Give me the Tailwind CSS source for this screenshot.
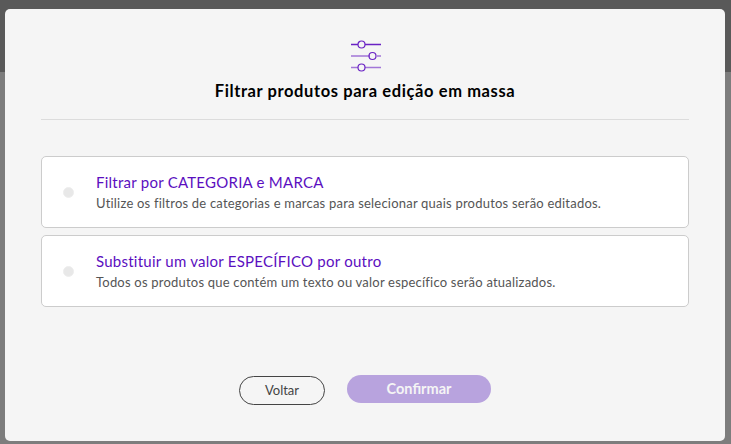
<!DOCTYPE html>
<html lang="pt-br">
<head>
    <meta charset="UTF-8">
    <title>Filtrar produtos</title>
    <script src="https://cdn.jsdelivr.net/npm/@tailwindcss/browser@4"></script>
</head>
<body class="bg-[#7d7d7d] font-['Lato',sans-serif]">
    <div class="relative w-[731px] h-[444px] overflow-hidden">
        <div class="h-[72px] bg-[#595959]"></div>
        <div class="h-[372px] bg-[#7d7d7d]"></div>

        <!-- Modal -->
        <div class="absolute left-[5px] top-[9px] w-[720px] h-[432px] bg-[#f5f5f5] rounded-[5px] flex flex-col items-center">
            <svg class="mt-[31px] ml-[2px]" width="32" height="34" viewBox="0 0 32 34" fill="none" stroke="#6a22c4" stroke-width="1.400">
                <path d="M1 4.500h7M15 4.500h16"/>
                <circle cx="11.500" cy="4.500" r="3.500" stroke-width="1.200"/>
                <path d="M1 16h19M27 16h4" stroke-opacity=".6"/>
                <circle cx="22.500" cy="16" r="3.500" stroke-width="1.200"/>
                <path d="M1 27.500h7M15 27.500h16" stroke-opacity=".6"/>
                <circle cx="11.500" cy="27.500" r="3.500" stroke-width="1.200"/>
            </svg>
            <h1 class="mt-[6px] text-[16.500px] leading-[22px] font-bold tracking-[0.6px] text-black">Filtrar produtos para edição em massa</h1>
            <div class="mt-[17px] w-[648px] border-t border-[#dcdcdc]"></div>

            <div class="mt-[36px] w-[648px] flex flex-col gap-[7px]">
                <div class="h-[72px] bg-white border border-[#cccccc] rounded-[5px] flex items-center">
                    <span class="mt-[1px] ml-[21px] w-[11px] h-[11px] rounded-full bg-[#e8e8e8] border border-[#eeeeee]"></span>
                    <div class="ml-[22px] pb-[2px]">
                        <p class="text-[15px] leading-[20px] tracking-[0.25px] text-[#5b0fc0]">Filtrar por CATEGORIA e MARCA</p>
                        <p class="mt-[3px] text-[13px] leading-[16px] tracking-[0.21px] text-[#555555]">Utilize os filtros de categorias e marcas para selecionar quais produtos serão editados.</p>
                    </div>
                </div>
                <div class="h-[72px] bg-white border border-[#cccccc] rounded-[5px] flex items-center">
                    <span class="mt-[1px] ml-[21px] w-[11px] h-[11px] rounded-full bg-[#e8e8e8] border border-[#eeeeee]"></span>
                    <div class="ml-[22px] pb-[2px]">
                        <p class="text-[15px] leading-[20px] tracking-[0.25px] text-[#5b0fc0]">Substituir um valor ESPECÍFICO por outro</p>
                        <p class="mt-[3px] text-[13px] leading-[16px] tracking-[0.21px] text-[#555555]">Todos os produtos que contém um texto ou valor específico serão atualizados.</p>
                    </div>
                </div>
            </div>

            <div class="mt-[68px] flex items-start gap-[22px]">
                <button class="mt-[1px] w-[86px] h-[29px] rounded-full border border-[#444444] text-[13px] text-[#444444]">Voltar</button>
                <button class="w-[144px] h-[28px] rounded-full bg-[#b8a3de] text-[14.500px] font-bold text-[#f5f5f5]">Confirmar</button>
            </div>
        </div>
    </div>
</body>
</html>
